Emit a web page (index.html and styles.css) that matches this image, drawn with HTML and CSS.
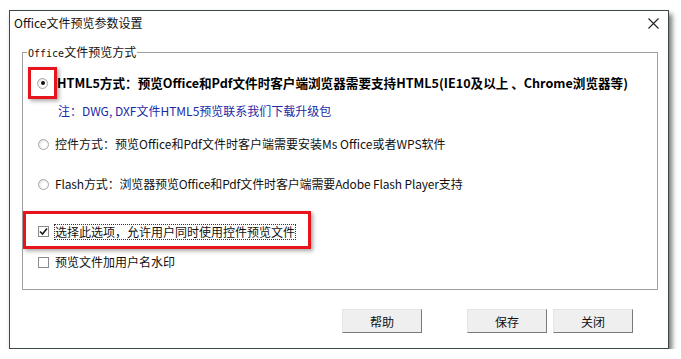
FILE: index.html
```html
<!DOCTYPE html>
<html>
<head>
  <title>Office文件预览参数设置</title>
  <link rel="stylesheet" href="styles.css">
</head>
<body>

<div class="window">
  <div class="titlebar">
    <span class="title">Office文件预览参数设置</span>
    <svg class="close" width="11" height="11" viewBox="0 0 11 11">
      <path d="M0.5 0.5 L10.5 10.5 M10.5 0.5 L0.5 10.5" stroke="#222" stroke-width="1.1" fill="none"/>
    </svg>
  </div>

  <fieldset class="group">
    <legend><span class="mono">Office</span>文件预览方式</legend>

    <div class="opt-main">
      <div class="mark"><span class="radio checked"></span></div>
      <span class="main-text">HTML5方式：预览Office和Pdf文件时客户端浏览器需要支持HTML5(IE10及以上 、Chrome浏览器等)</span>
    </div>
    <div class="note">注：DWG, DXF文件HTML5预览联系我们下载升级包</div>

    <div class="opt opt-2">
      <span class="cell"><span class="radio"></span></span>
      <span>控件方式：预览Office和Pdf文件时客户端需要安装Ms Office或者WPS软件</span>
    </div>
    <div class="opt opt-3">
      <span class="cell"><span class="radio"></span></span>
      <span class="flash">Flash方式：浏览器预览Office和Pdf文件时客户端需要Adobe Flash Player支持</span>
    </div>

    <div class="mark-wide">
      <span class="check checked">
        <svg width="9" height="9" viewBox="0 0 9 9"><path d="M1 4.5 L3.5 7 L8 1.5" stroke="#1a1a1a" stroke-width="1.6" fill="none"/></svg>
      </span>
      <span class="focus">选择此选项，允许用户同时使用控件预览文件</span>
    </div>

    <div class="opt opt-5">
      <span class="cell"><span class="check"></span></span>
      <span>预览文件加用户名水印</span>
    </div>
  </fieldset>

  <div class="buttons">
    <button class="help">帮助</button>
    <button>保存</button>
    <button>关闭</button>
  </div>
</div>

</body>
</html>
```

FILE: styles.css
```css
body {
  margin: 0;
  background: white;
  font-family: "Noto Sans CJK SC", "Liberation Sans", sans-serif;
  font-size: 12px;
  color: #111;
}

.window {
  margin: 10px 0 0 9px;
  width: 658px;
  height: 337px;
  border: 1px solid #3c4a42;
  background: white;
  box-shadow: 3px 4px 5px rgba(0, 0, 0, 0.55);
  display: flex;
  flex-direction: column;
}

.titlebar {
  height: 24px;
  display: flex;
  align-items: center;
  justify-content: space-between;
  padding: 0 9px 0 4px;
}

.title {
  font-size: 12px;
  line-height: 16px;
}

.close {
  display: block;
}

.group {
  margin: 10px 10px 0 12px;
  padding: 0;
  height: 243px;
  border: 1px solid #a0a0a0;
  min-width: 0;
  flex-shrink: 0;
}

.group legend {
  margin-left: 4px;
  padding: 0 1px;
  font-size: 12px;
  line-height: 14px;
  height: 14px;
}

.mono {
  font-family: "DejaVu Sans Mono", "Liberation Mono", monospace;
  font-size: 10px;
}

.opt-main {
  display: flex;
  align-items: center;
  margin: 8px 0 0 5px;
}

.mark {
  width: 23px;
  height: 26px;
  border: 3px solid #e8141b;
  box-shadow: 2px 2px 4px rgba(0, 0, 0, 0.35);
  display: flex;
  align-items: center;
  justify-content: center;
}

.main-text {
  font-weight: bold;
  font-size: 12.6px;
  line-height: 16px;
  color: #000;
  white-space: nowrap;
}

.note {
  margin: 4px 0 0 35px;
  line-height: 16px;
  color: #1c29a6;
}

.opt {
  display: flex;
  align-items: center;
  height: 16px;
  line-height: 16px;
}

.opt-2 { margin-top: 17px; }
.opt-3 { margin-top: 24px; }
.opt-5 { margin-top: 5px; }

.flash {
  letter-spacing: -0.15px;
}

.cell {
  width: 32px;
  display: flex;
  justify-content: flex-start;
  padding-left: 15px;
  box-sizing: border-box;
}

.radio {
  width: 11px;
  height: 11px;
  border-radius: 50%;
  border: 1px solid #a8a8a8;
  box-sizing: border-box;
  background: radial-gradient(circle at 60% 60%, #ffffff 30%, #d8d8d8 100%);
  display: flex;
  align-items: center;
  justify-content: center;
}

.radio.checked::after {
  content: "";
  width: 4px;
  height: 4px;
  border-radius: 50%;
  background: #111;
}

.check {
  width: 11px;
  height: 11px;
  border: 1px solid #8a8a8a;
  box-sizing: border-box;
  background: white;
  display: flex;
  align-items: center;
  justify-content: center;
}

.check svg {
  display: block;
}

.mark-wide {
  margin-top: 19px;
  width: 282px;
  height: 29px;
  padding-top: 3px;
  border: 3px solid #e8141b;
  box-shadow: 2px 2px 4px rgba(0, 0, 0, 0.35);
  display: flex;
  align-items: center;
}

.mark-wide .check {
  margin-left: 12px;
}

.focus {
  margin-left: 5px;
  border: 1px dotted #333;
  line-height: 14px;
  padding: 0;
}

.buttons {
  display: flex;
  justify-content: flex-end;
  gap: 6px;
  margin: 19px 35px 0 0;
}

button {
  width: 80px;
  height: 24px;
  font-family: "Noto Sans CJK SC", sans-serif;
  font-size: 12px;
  background: #efefef;
  border: 1px solid;
  border-color: #e4e4e4 #7a7a7a #7a7a7a #e4e4e4;
  padding: 0;
  color: #111;
}

button.help {
  margin-right: 39px;
}
```
